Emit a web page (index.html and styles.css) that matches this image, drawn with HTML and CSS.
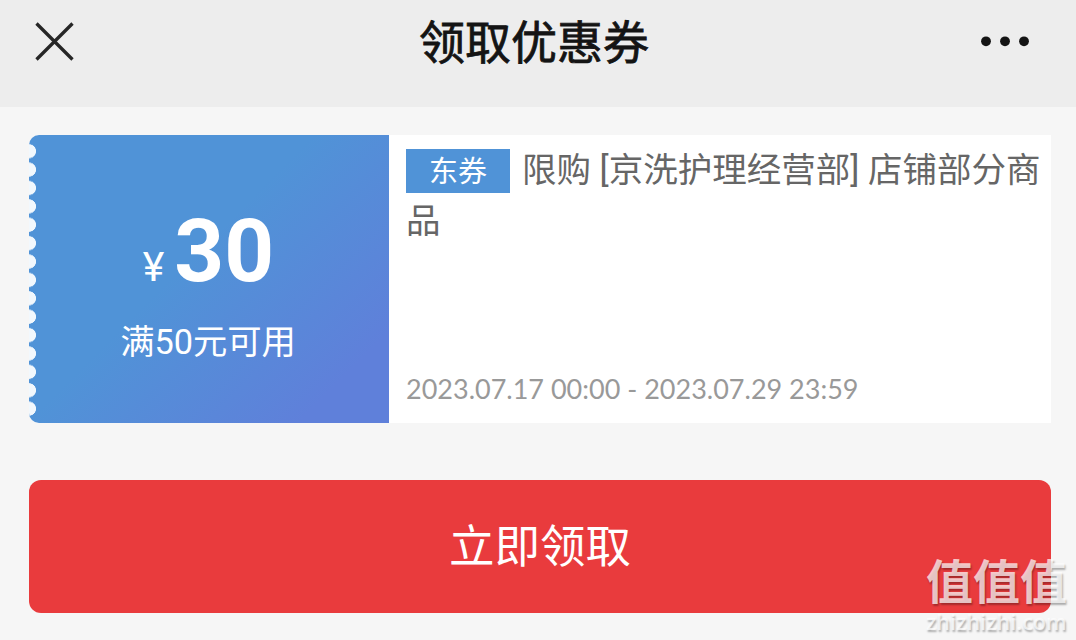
FILE: index.html
```
<!DOCTYPE html>
<html lang="zh-CN">
<head>
<meta charset="UTF-8">
<meta name="viewport" content="width=device-width, initial-scale=1.0">
<title>领取优惠券</title>
<link rel="stylesheet" href="styles.css">
</head>
<body>
  <header>
    <button class="icon-btn" aria-label="关闭">
      <svg width="40" height="40" viewBox="0 0 40 40"><path d="M2.500 2.500L38.500 38.500M38.500 2.500L2.500 38.500" stroke="#262626" stroke-width="3.300" fill="none"/></svg>
    </button>
    <h1>领取优惠券</h1>
    <button class="icon-btn more" aria-label="更多">
      <svg width="50" height="12" viewBox="0 0 50 12" fill="#141414"><circle cx="6" cy="6.300" r="4.900"/><circle cx="25" cy="6.300" r="4.900"/><circle cx="44" cy="6.300" r="4.900"/></svg>
    </button>
  </header>

  <main>
    <section class="coupon">
      <div class="coupon-value">
        <p class="price"><span class="yen">¥</span><strong>30</strong></p>
        <p class="limit">满50元可用</p>
      </div>
      <div class="coupon-info">
        <div class="desc"><span class="tag">东券</span><span>限购 [京洗护理经营部] 店铺部分商品</span></div>
        <p class="date">2023.07.17 00:00 - 2023.07.29 23:59</p>
      </div>
    </section>

    <button class="get-btn">立即领取</button>
  </main>

  <div class="watermark">
    <span class="mark-name">值值值</span>
    <span class="mark-site">zhizhizhi.com</span>
  </div>
</body>
</html>
```
FILE: styles.css
```
* {
  margin: 0;
  padding: 0;
  box-sizing: border-box;
}

body {
  position: relative;
  height: 640px;
  overflow: hidden;
  background-color: #f6f6f6;
  font-family: Roboto, "Noto Sans CJK SC", sans-serif;
}

button {
  border: none;
  background: none;
  cursor: pointer;
}

header {
  display: grid;
  grid-template-columns: 106px 1fr 102px;
  height: 107px;
  padding: 0 46px 0 34px;
  background-color: #ededed;
}

header h1 {
  font-size: 46px;
  font-weight: 400;
  line-height: 86px;
  text-align: center;
  color: #141414;
  -webkit-text-stroke: 0.8px #141414;
}

.icon-btn {
  display: flex;
  align-items: center;
  height: 82px;
}

.more {
  justify-content: flex-end;
}

main {
  padding: 28px 25px 0 29px;
}

.coupon {
  display: flex;
  height: 288px;
  background-color: #fff;
  border-radius: 10px 0 0 10px;
  overflow: hidden;
}

.coupon-value {
  position: relative;
  width: 360px;
  padding: 66px 2px 0 0;
  color: #fff;
  text-align: center;
  background: linear-gradient(135deg, #5093d7 44%, #5f80da 86%);
}

/* ticket edge */
.coupon-value::before {
  content: "";
  position: absolute;
  left: 0;
  top: 7px;
  width: 8px;
  height: 276px;
  background: radial-gradient(circle at 0 50%, #f2f8fd 6.7px, transparent 7.3px) 0 0 / 8px 18.4px;
}

.price {
  display: flex;
  justify-content: center;
  align-items: baseline;
  height: 100px;
  padding-left: 1px;
  line-height: 100px;
}

.yen {
  margin-right: 10px;
  font-size: 41px;
}

.price strong {
  font-size: 87px;
  font-weight: 700;
}

.limit {
  margin-top: 16px;
  font-size: 34.3px;
  line-height: 50px;
}

.coupon-info {
  flex: 1;
  display: flex;
  flex-direction: column;
  justify-content: space-between;
  padding: 10px 0 14px 17px;
}

.desc {
  font-size: 34.5px;
  line-height: 51px;
  color: #666;
}

.tag {
  float: left;
  width: 104px;
  height: 44px;
  margin: 4px 12px 0 0;
  font-size: 29px;
  line-height: 47px;
  text-align: center;
  color: #fff;
  background-color: #5093d7;
}

.date {
  font-family: Lato, sans-serif;
  font-size: 27px;
  line-height: 40px;
  color: #999;
}

.get-btn {
  display: block;
  width: 100%;
  height: 133px;
  margin-top: 57px;
  padding-bottom: 8px;
  border-radius: 12px;
  background-color: #e93b3d;
  color: #fff;
  font-family: inherit;
  font-size: 45.5px;
}

.watermark {
  position: absolute;
  right: 8px;
  bottom: 4px;
  width: 142px;
  color: rgba(255, 255, 255, 0.72);
  text-shadow: 1px 2px 2px rgba(0, 0, 0, 0.3);
}

.watermark span {
  display: block;
  white-space: nowrap;
}

.mark-name {
  font-size: 47px;
  font-weight: 700;
  line-height: 50px;
}

.mark-site {
  font-family: "Open Sans", sans-serif;
  font-size: 21.6px;
  font-weight: 600;
  line-height: 28px;
}
```
